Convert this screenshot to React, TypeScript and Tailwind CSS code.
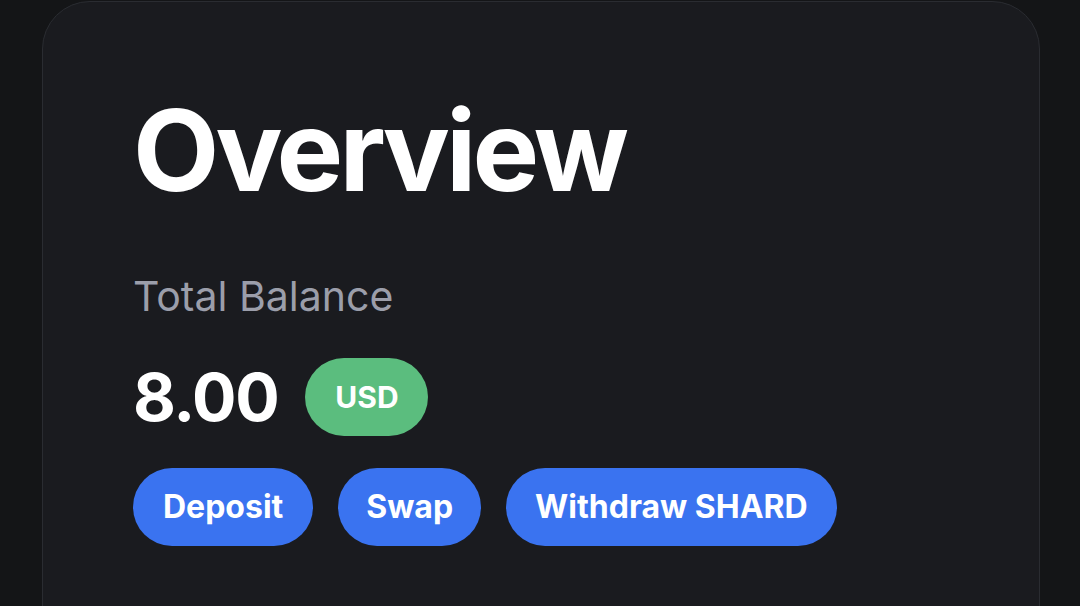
export default function App() {
  const font = { fontFamily: 'Inter, "Noto Sans", sans-serif' };
  return (
    <div className="h-[606px] w-[1080px] overflow-hidden bg-[#141517]" style={font}>
      <div className="ml-[42px] mt-[1px] h-[700px] w-[998px] rounded-[48px] border border-[#2a2c31] bg-[#1a1b1f] pl-[90px] pt-[92px]">
        <h1 className="text-[112px] font-bold leading-none tracking-[-0.035em] text-white">Overview</h1>
        <p className="mt-[70px] text-[41px] leading-none text-[#9b9eaa]">Total Balance</p>
        <div className="mt-[41px] flex items-center gap-[27px]">
          <span className="text-[66px] font-bold leading-none tracking-[-0.02em] text-white">8.00</span>
          <span className="flex h-[78px] w-[123px] items-center justify-center rounded-full bg-[#5bbd7e] text-[30px] font-bold text-white">
            USD
          </span>
        </div>
        <div className="mt-[32px] flex gap-[25px]">
          <button className="h-[78px] rounded-full bg-[#3a73f0] px-[30px] text-[32px] font-bold text-white">Deposit</button>
          <button className="h-[78px] rounded-full bg-[#3a73f0] px-[28px] text-[32px] font-bold text-white">Swap</button>
          <button className="h-[78px] rounded-full bg-[#3a73f0] px-[29px] text-[32px] font-bold text-white">Withdraw SHARD</button>
        </div>
      </div>
    </div>
  );
}
